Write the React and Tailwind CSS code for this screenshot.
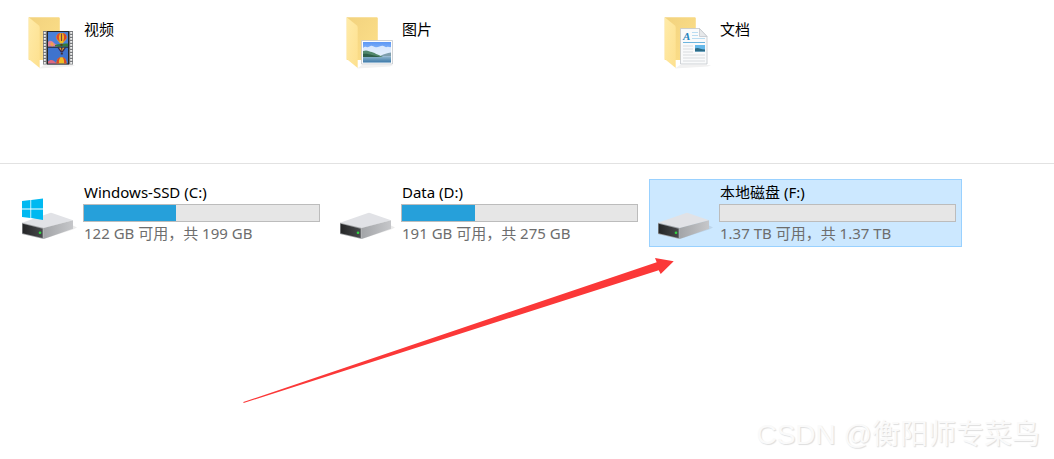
import { useState } from "react"
import clsx from "clsx"

const FOLDERS = [
  { id: "videos",    name: "视频", Badge: FilmBadge },
  { id: "pictures",  name: "图片", Badge: PhotoBadge },
  { id: "documents", name: "文档", Badge: DocumentBadge },
]

const DRIVES = [
  { id: "c", name: "Windows-SSD (C:)", info: "122 GB 可用，共 199 GB",   used: 39, system: true },
  { id: "d", name: "Data (D:)",        info: "191 GB 可用，共 275 GB",   used: 31 },
  { id: "f", name: "本地磁盘 (F:)",     info: "1.37 TB 可用，共 1.37 TB", used: 0 },
]

function Balloon({ x, y }) {
  return (
    <g transform={`translate(${x} ${y})`}>
      <path d="M0 0c-3.400 0-5.200 2.200-5.200 4.600C-5.200 7-2.400 8.600-1.400 10.400h2.800C2.400 8.600 5.200 7 5.200 4.600 5.200 2.200 3.400 0 0 0z" fill="#f3bd24" />
      <path d="M-5.100 3.800C-4.600 1-2.400.2-1 .1-2.800 2-3 5-1.600 9-2.600 7.600-5.400 6.400-5.100 3.800z" fill="#dd4a2b" />
      <path d="M5.100 3.800C4.600 1 2.400.2 1 .1 2.800 2 3 5 1.600 9 2.600 7.600 5.400 6.400 5.100 3.800z" fill="#d8452c" />
      <path d="M-.6.500H.6v7.500H-.6z" fill="#7b3b45" />
      <path d="M-1 10.800h2v2h-2z" fill="#5e351d" />
    </g>
  )
}

function FilmBadge() {
  const holes = [32, 35, 38, 41, 44, 47, 50, 53, 56, 59, 62]
  return (
    <g>
      <path d="M43 31h30v33.500H43z" fill="#77797c" />
      <path d="M47 31h22v33.500H47z" fill="#25272a" />
      {holes.map((y) => (
        <g key={y} fill="#f0f0f0">
          <rect x="43.800" y={y} width="2" height="1.800" />
          <rect x="70.200" y={y} width="2" height="1.800" />
        </g>
      ))}
      <path d="M48 32h20v14.500H48z" fill="#4a80d8" />
      <path d="M48 47.700h20v15.800H48z" fill="#3f73cd" />
      <path d="M48 42c1.500-2 3-1.500 4.500-.5s2.500 3 5 3.500v1.500H48z" fill="#e0819a" />
      <path d="M50 44l2-2 2 3-2 1.500z" fill="#f0a24c" />
      <path d="M55 45c4-1 9-1.500 13-1.500v3H55z" fill="#347b3d" />
      <Balloon x={61.500} y={33} />
      <path d="M57.500 47.700h8.500l-3 4.300h-2.500z" fill="#3a2950" />
      <path d="M59 47.700h2l.6 3.500zM64.500 47.700h-2l-.6 3.500z" fill="#e3a22c" />
      <path d="M60.800 52.500h2v2h-2z" fill="#402a30" />
      <path d="M48 61.500c2-2 4-2 6-.5s1.500 1.500 3 2.500h-9z" fill="#df6a80" />
      <path d="M56.500 63.500c0-4 2-6.200 5-6.200s5 2.200 5 6.200z" fill="#efbd25" />
      <path d="M56.500 63.500c0-4 2-6.200 4-6.200-1.500 2-1.800 4-1.500 6.200zM66.500 63.500c0-4-2-6.200-4-6.200 1.500 2 1.800 4 1.500 6.200z" fill="#d6482e" />
    </g>
  )
}

function PhotoBadge() {
  return (
    <g>
      <path d="M43.500 40.500h31v23.500h-31z" fill="#fdfdfd" stroke="#c3c7cb" strokeWidth=".8" />
      <path d="M45 42h28v20.500H45z" fill="url(#sky)" />
      <path d="M45 48c1-1 2-1.500 3.500-1s2.500 0 4-1 3 .5 4.500 1 3 0 4.500-.5 2.500-1 4-.5 2 1.500 3.500 1 3 .5 4 0v9H45z" fill="#f1f8fe" opacity=".8" />
      <path d="M63 55.500c3-1.500 6-2.500 10-3v4H63z" fill="#7f9fae" />
      <path d="M45 51c2-.6 4-.8 6 .2 2 1 3.500.6 5.500 1.800s5 2.200 8.500 4H45z" fill="#51876c" />
      <path d="M45 54c4-.5 6 .5 9 1s6 1 9 2.500H45z" fill="#2e5f49" />
      <path d="M45 57h28v5.500H45z" fill="url(#lake)" />
    </g>
  )
}

function DocumentBadge() {
  return (
    <g>
      <path d="M44.500 28.500h19l7.500 8V64H44.500z" fill="#f9fafb" stroke="#c3c7cb" strokeWidth=".8" />
      <path d="M63.500 28.500v8H71z" fill="#e6e8ea" stroke="#c3c7cb" strokeWidth=".8" />
      <text x="47" y="40" fontSize="11" fontStyle="italic" fontWeight="bold"
            fontFamily="'Liberation Serif', serif" fill="#2583bd">A</text>
      <path d="M56 32.500h6M56 35.500h6M56 38.500h13" stroke="#b9dcf1" strokeWidth="1" />
      <path d="M47 42.500h22" stroke="#6db5de" strokeWidth="1" />
      <path d="M47 46h10M47 49h10M47 52h10M47 55h22M47 58h22M47 61h22" stroke="#d9dcdf" strokeWidth="1" />
      <path d="M59 45h10v6.500H59z" fill="#66b9ea" />
      <path d="M59 48.500c3-1.500 5 .5 10 1v2H59z" fill="#2b6b86" />
    </g>
  )
}

function FolderIcon({ Badge }) {
  return (
    <svg viewBox="21 14 56 56" className="size-14 shrink-0" aria-hidden="true">
      <defs>
        <linearGradient id="folderBack" x1="0" y1="0" x2="1" y2="1">
          <stop offset="0" stopColor="#f2d27e" />
          <stop offset="1" stopColor="#fde08a" />
        </linearGradient>
        <linearGradient id="folderFlap" x1="0" y1="0" x2="1" y2="1">
          <stop offset="0" stopColor="#ffeba9" />
          <stop offset="1" stopColor="#fde08e" />
        </linearGradient>
        <linearGradient id="sky" x1="0" y1="0" x2="0" y2="1">
          <stop offset="0" stopColor="#5b97f5" />
          <stop offset="1" stopColor="#d4eafb" />
        </linearGradient>
        <linearGradient id="lake" x1="0" y1="0" x2="0" y2="1">
          <stop offset="0" stopColor="#86afc8" />
          <stop offset="1" stopColor="#3c78a8" />
        </linearGradient>
      </defs>
      <path d="M39 68.500l5-3.500h31l-3 1.500z" fill="#f1f1f1" />
      <path d="M28.700 17.300h30.300l.8.800V60H28.700z" fill="url(#folderBack)" />
      <path d="M28.700 17.300l10.200 8.200q.8.800.8 2V68L28.700 59z" fill="url(#folderFlap)" />
      <Badge />
    </svg>
  )
}

function DriveIcon({ system }) {
  return (
    <svg viewBox="21 193 56 48" className="h-12 w-14 shrink-0" aria-hidden="true">
      <defs>
        <linearGradient id="driveSide" x1="0" y1="0" x2="1" y2="0">
          <stop offset="0" stopColor="#a3a5a8" />
          <stop offset="1" stopColor="#c6c7ca" />
        </linearGradient>
        <linearGradient id="driveFront" x1="0" y1="0" x2="1" y2="0">
          <stop offset="0" stopColor="#242526" />
          <stop offset="1" stopColor="#484a4c" />
        </linearGradient>
      </defs>
      <path d="M44 239l29-9.500 4-2-4-2z" fill="#000" opacity=".08" />
      <path d="M22 222.700l28-9.700q1-.3 2 0l21 7.300-29.300 8z" fill="#e1e2e6" />
      <path d="M43.700 228l29.300-7.700v8.400L43.700 239z" fill="url(#driveSide)" />
      <path d="M22 222.700l21.700 5.300v11L22 234z" fill="#9b9da0" />
      <path d="M22.600 223.800l20 4.900v9.200l-20-4.600z" fill="url(#driveFront)" />
      <circle cx="40" cy="232.800" r="1.300" fill="#31d843" />
      {system && (
        <path
          d="M22 201.100l8.400-1v8.500H22zM31.200 200l11.800-1.400v10H31.200zM22 209.400h8.400v8.500l-8.400-.9zM31.200 209.400H43v10.500L31.200 218z"
          fill="#00b9f1"
        />
      )}
    </svg>
  )
}

function Tile({ selected, onSelect, className, children }) {
  return (
    <button
      type="button"
      aria-pressed={selected}
      onClick={onSelect}
      className={clsx(
        "flex gap-1.5 border pl-[7px] pr-[5px] text-left",
        selected ? "border-[#99d1ff] bg-[#cce8ff]" : "border-transparent",
        className
      )}
    >
      {children}
    </button>
  )
}

export default function App() {
  const [selected, setSelected] = useState("f")

  return (
    <div
      className="relative min-h-screen overflow-hidden bg-white text-[15px] leading-5 text-black
                 font-['Noto_Sans','Noto_Sans_CJK_SC',sans-serif]"
      lang="zh-CN"
    >
      {/* Folders */}
      <section className="grid grid-cols-[repeat(auto-fill,313px)] gap-[5px] border-b border-[#e2e2e2] pt-2 pb-[87px] pl-[13px]">
        {FOLDERS.map(({ id, name, Badge }) => (
          <Tile key={id} selected={selected === id} onSelect={() => setSelected(id)} className="py-[5px]">
            <FolderIcon Badge={Badge} />
            <span className="pt-[5px] pl-px">{name}</span>
          </Tile>
        ))}
      </section>

      {/* Drives */}
      <section className="grid grid-cols-[repeat(auto-fill,313px)] gap-[5px] pt-[15px] pl-[13px]">
        {DRIVES.map((drive) => (
          <Tile
            key={drive.id}
            selected={selected === drive.id}
            onSelect={() => setSelected(drive.id)}
            className="items-end pt-0.5 pb-[3px]"
          >
            <span className="pb-0.5">
              <DriveIcon system={drive.system} />
            </span>
            <span className="flex flex-1 flex-col">
              <span className="pl-px">{drive.name}</span>
              <span className="mt-0.5 flex h-[18px] border border-[#bcbcbc] bg-[#e6e6e6]">
                <span className="bg-[#26a0da]" style={{ width: `${drive.used}%` }} />
              </span>
              <span className="mt-px pl-px text-[#6d6d6d]">{drive.info}</span>
            </span>
          </Tile>
        ))}
      </section>

      {/* Arrow pointing at the drive */}
      <svg
        viewBox="243 257 432 147"
        className="pointer-events-none absolute top-[257px] left-[243px] h-[147px] w-[432px]"
        aria-hidden="true"
      >
        <path d="M243.300 402L656.700 262.300 655 258l18.700 3.300-13 12.700-2-3.700L243.600 403z" fill="#fb3838" />
      </svg>

      <p
        className="pointer-events-none absolute right-3.5 bottom-1.5 text-[28px] leading-9 text-[#fafafa]
                   font-['Liberation_Sans','Noto_Sans_CJK_SC',sans-serif] [text-shadow:1px_1px_1px_#dedede]"
      >
        CSDN @衡阳师专菜鸟
      </p>
    </div>
  )
}
